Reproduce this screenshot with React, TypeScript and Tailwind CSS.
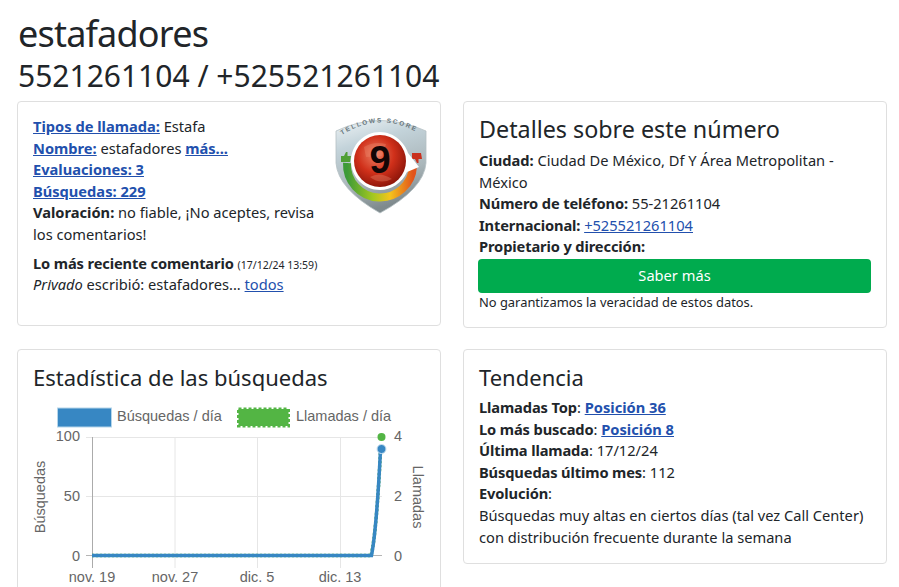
import type { ReactNode } from "react";

const linkClass = "text-[#2250ad] underline";
const tightBold = "font-bold tracking-[-0.12px]";

function Card({ children, className }: { children: ReactNode; className?: string }) {
  return <div className={`rounded-[4px] border border-[#dfdfdf] bg-white ${className ?? ""}`}>{children}</div>;
}

function ScoreBadge() {
  return (
    <svg viewBox="13 15 100 100" className="h-[100px] w-[100px]">
      <defs>
        <linearGradient id="shield" x1="0" y1="0" x2="0.3" y2="1">
          <stop offset="0" stopColor="#eef3f5" />
          <stop offset="0.3" stopColor="#c3d3da" />
          <stop offset="0.7" stopColor="#aab6ba" />
          <stop offset="1" stopColor="#7f8a8d" />
        </linearGradient>
        <linearGradient id="arc" x1="0" y1="0" x2="1" y2="0">
          <stop offset="0" stopColor="#3d9a38" />
          <stop offset="0.4" stopColor="#a5c81f" />
          <stop offset="0.65" stopColor="#f4c41c" />
          <stop offset="1" stopColor="#e2541b" />
        </linearGradient>
        <radialGradient id="ball" cx="0.42" cy="0.38" r="0.7">
          <stop offset="0" stopColor="#ec7f63" />
          <stop offset="0.5" stopColor="#d0301a" />
          <stop offset="1" stopColor="#7f1007" />
        </radialGradient>
        <path id="scoreCurve" d="M22 34 Q61 9 102 34" />
      </defs>
      <path d="M16 30 Q60 9 106 30 L106 62 Q104 88 60 112 Q18 88 16 62 Z" fill="url(#shield)" stroke="#b4bfc3" strokeWidth="0.8" />
      <text fontFamily="'Liberation Sans', sans-serif" fontSize="6.4" fontWeight="700" letterSpacing="1.75" fill="#67767c">
        <textPath href="#scoreCurve">TELLOWS SCORE</textPath>
      </text>
      <path d="M21 61 L21 55 L24 55 L26 51 L27.5 51 L27.5 55 L31 55 L30 61 Z" fill="#4f9f35" />
      <path d="M92 52 L92 58 L95 58 L97 62 L98.5 62 L98.5 58 L102 58 L101 52 Z" fill="#c9301d" />
      <path d="M27 62 A33 33 0 0 0 93 65" fill="none" stroke="url(#arc)" strokeWidth="8" />
      <path d="M60 31 C74 31 85 42 88 52 L99 66 L87 71 C82 82 71 89 60 89 C44 89 31 76 31 60 C31 44 44 31 60 31 Z" fill="#fff" />
      <circle cx="60" cy="60" r="26" fill="url(#ball)" />
      <path d="M44 46 Q54 40 66 43 L62 55 L46 56 Z M50 76 Q60 70 72 78 Q60 84 50 76 Z" fill="#ef8f74" opacity="0.35" />
      <text x="60" y="71.5" textAnchor="middle" fontFamily="'Liberation Sans', sans-serif" fontSize="38" fontWeight="700" fill="#120606">9</text>
    </svg>
  );
}

function SearchChart() {
  const tickText = "fill-[#666] text-[14.5px]";
  return (
    <svg viewBox="17 400 424 187" className="mt-[7px] block h-[187px] w-[424px]" fontFamily="'Liberation Sans', Arial, sans-serif">
      <rect x="57.5" y="408" width="54" height="19" fill="#3787c3" stroke="#b5d5ea" />
      <text x="117" y="421" className={tickText}>Búsquedas / día</text>
      <rect x="238.5" y="409" width="50" height="17" fill="#53b544" />
      <rect x="238.5" y="409" width="50" height="17" fill="none" stroke="#53b544" strokeWidth="3" strokeDasharray="3 2" />
      <text x="296" y="421" className={tickText}>Llamadas / día</text>

      {[175, 257.5, 340.5].map((x) => (
        <line key={x} x1={x} x2={x} y1="437" y2="568" stroke="#e6e6e6" />
      ))}
      <line x1="86" x2="382" y1="437.5" y2="437.5" stroke="#e6e6e6" />
      <line x1="86" x2="382" y1="496.5" y2="496.5" stroke="#e6e6e6" />
      <line x1="86" x2="382" y1="555.5" y2="555.5" stroke="#b5b5b5" />
      <line x1="92.5" x2="92.5" y1="437" y2="568" stroke="#ababab" />

      <text x="80" y="441" textAnchor="end" className={tickText}>100</text>
      <text x="80" y="501" textAnchor="end" className={tickText}>50</text>
      <text x="80" y="561" textAnchor="end" className={tickText}>0</text>
      <text x="394" y="441" className={tickText}>4</text>
      <text x="394" y="501" className={tickText}>2</text>
      <text x="394" y="561" className={tickText}>0</text>
      <text transform="translate(45 497) rotate(-90)" textAnchor="middle" className={tickText}>Búsquedas</text>
      <text transform="translate(413 497) rotate(90)" textAnchor="middle" className={tickText}>Llamadas</text>

      <text x="92" y="582" textAnchor="middle" className={tickText}>nov. 19</text>
      <text x="175" y="582" textAnchor="middle" className={tickText}>nov. 27</text>
      <text x="257" y="582" textAnchor="middle" className={tickText}>dic. 5</text>
      <text x="340" y="582" textAnchor="middle" className={tickText}>dic. 13</text>

      <path d="M92 555.5 L371 555.5 C375 540 378 500 380.5 452" fill="none" stroke="#53b544" strokeWidth="3.5" strokeDasharray="2 2" />
      <path d="M92 555.5 L371.5 555.5 C375.5 535 378 500 380.5 450" fill="none" stroke="#3787c3" strokeWidth="3.5" />
      <circle cx="381.5" cy="437" r="4" fill="#53b544" />
      <circle cx="381.5" cy="449" r="4.5" fill="#3787c3" stroke="#cfe3f1" />
    </svg>
  );
}

export default function App() {
  return (
    <div className="h-[587px] overflow-hidden bg-white pl-[17px] pr-[12px] text-[14.65px] leading-[21.6px] text-[#212529] font-['Noto_Sans',sans-serif]">
      <h1 className="ml-[1px] mt-[9px] text-[36px] leading-[50px] tracking-[-0.8px]">estafadores</h1>
      <h2 className="ml-[1px] text-[30px] leading-[34px]">5521261104 / +525521261104</h2>

      <div className="mt-[8px] grid grid-cols-[424px_424px] gap-x-[22px] gap-y-[21px] items-start">
        <Card className="h-[225px] px-[15px] pt-[14px]">
          <div className="float-right -mr-[8px]">
            <ScoreBadge />
          </div>
          <a className={`${linkClass} font-bold`}>Tipos de llamada:</a> Estafa
          <br />
          <a className={`${linkClass} font-bold`}>Nombre:</a> estafadores <a className={`${linkClass} font-bold`}>más...</a>
          <br />
          <a className={`${linkClass} font-bold`}>Evaluaciones: 3</a>
          <br />
          <a className={`${linkClass} font-bold`}>Búsquedas: 229</a>
          <div>
            <b>Valoración:</b> no fiable, ¡No aceptes, revisa los comentarios!
          </div>
          <div className="mt-[7px]">
            <b className={tightBold}>Lo más reciente comentario</b> <span className="text-[10.5px]">(17/12/24 13:59)</span>
          </div>
          <div className="-mt-[2px]">
            <i>Privado</i> escribió: estafadores... <a className={linkClass}>todos</a>
          </div>
        </Card>

        <Card className="h-[227px] px-[15px] pt-[11px]">
          <h3 className="text-[23.3px] leading-[32px]">Detalles sobre este número</h3>
          <div className="mt-[5px]">
            <b>Ciudad:</b> Ciudad De México, Df Y Área Metropolitan - México
            <br />
            <b className={tightBold}>Número de teléfono:</b> 55-21261104
            <br />
            <b className={tightBold}>Internacional:</b> <a className={linkClass}>+525521261104</a>
            <br />
            <b className={tightBold}>Propietario y dirección:</b>
          </div>
          <button className="-ml-px mt-[1px] h-[34px] w-[393px] rounded-[4px] bg-[#00ab4e] text-white">Saber más</button>
          <p className="-mt-[1px] text-[12.9px]">No garantizamos la veracidad de estos datos.</p>
        </Card>

        <Card className="h-[260px] px-[15px] pt-[11px]">
          <h3 className="text-[22px] leading-[32px]">Estadística de las búsquedas</h3>
          <div className="-mx-[16px]">
            <SearchChart />
          </div>
        </Card>

        <Card className="h-[215px] px-[15px] pt-[11px]">
          <h3 className="text-[22px] leading-[32px]">Tendencia</h3>
          <div className="mt-[4px]">
            <b className={tightBold}>Llamadas Top</b>: <a className={`${linkClass} font-bold`}>Posición 36</a>
            <br />
            <b className={tightBold}>Lo más buscado</b>: <a className={`${linkClass} font-bold`}>Posición 8</a>
            <br />
            <b className={tightBold}>Última llamada</b>: 17/12/24
            <br />
            <b className={tightBold}>Búsquedas último mes</b>: 112
            <br />
            <b className={tightBold}>Evolución</b>:
            <br />
            Búsquedas muy altas en ciertos días (tal vez Call Center) con distribución frecuente durante la semana
          </div>
        </Card>
      </div>
    </div>
  );
}
